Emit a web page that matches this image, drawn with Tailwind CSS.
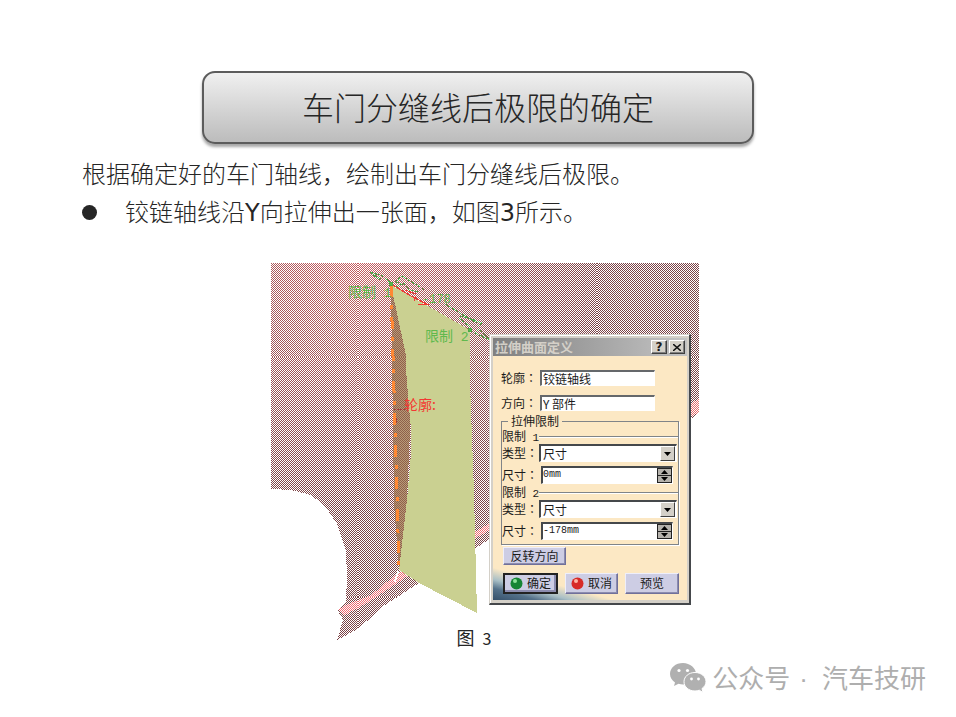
<!DOCTYPE html>
<html lang="zh-CN">

<head>
    <meta charset="UTF-8">
    <meta name="viewport" content="width=device-width, initial-scale=1.0">
    <title>车门分缝线后极限的确定</title>
    <script src="https://cdn.jsdelivr.net/npm/@tailwindcss/browser@4"></script>
</head>

<body class="bg-white text-[#262626] font-['Noto_Sans_CJK_SC',sans-serif]">
    <main class="pt-[71px]">
        <h1 class="mx-auto flex h-[73px] max-w-[552px] items-center justify-center rounded-[13px] border-2 border-[#5c5c5c] bg-linear-to-b from-[#f0f0f0] to-[#bcbcbc] pb-1 text-[32px] font-light shadow-[0_3px_3px_rgba(0,0,0,0.35)]">车门分缝线后极限的确定</h1>

        <section class="px-[82px] pt-[10px] text-[24px] leading-[38px] font-light">
            <p>根据确定好的车门轴线，绘制出车门分缝线后极限。</p>
            <ul>
                <li class="flex items-center">
                    <span class="mr-7 size-[15px] rounded-full bg-[#262626]"></span>
                    <span>铰链轴线沿<span class="font-['DejaVu_Sans'] font-normal">Y</span>向拉伸出一张面，如图<span class="font-['DejaVu_Sans'] font-normal">3</span>所示。</span>
                </li>
            </ul>
        </section>

        <figure class="pt-[31px]">
            <div class="relative left-[7px] mx-auto h-[378px] w-[428px]">
                <!-- CAD view: dithered door panel with the extruded surface -->
                <svg class="block" width="428" height="378" viewBox="0 0 428 378" shape-rendering="crispEdges" role="img" aria-label="拉伸曲面">
                    <defs>
                        <pattern id="even" width="2" height="2" patternUnits="userSpaceOnUse">
                            <path fill="#fff" d="M0 0h1v1h-1zM1 1h1v1h-1z" />
                        </pattern>
                        <pattern id="odd" width="2" height="2" patternUnits="userSpaceOnUse">
                            <path fill="#fff" d="M1 0h1v1h-1zM0 1h1v1h-1z" />
                        </pattern>
                        <mask id="dither" maskUnits="userSpaceOnUse" x="0" y="0" width="428" height="378">
                            <path fill="url(#even)" d="M0 0h87v94h-87zM326 0h102v94h-102zM87 94h239v240h-239zM0 334h87v44h-87z" />
                            <path fill="url(#odd)" d="M87 0h239v94h-239zM0 94h87v240h-87zM326 94h102v284h-102zM87 334h239v44h-239z" />
                        </mask>
                        <radialGradient id="panel" gradientUnits="userSpaceOnUse" cx="80" cy="-10" r="260">
                            <stop offset="0" stop-color="#c95f62" />
                            <stop offset=".4" stop-color="#a5585a" />
                            <stop offset="1" stop-color="#7b4346" />
                        </radialGradient>
                    </defs>
                    <g mask="url(#dither)">
                        <path fill="url(#panel)" d="M0 0H428V150L418 157L219 276L148 320L114 342L87 366L66 377L72 357L67 348L75 338L76 315L75 287L66 261L54 243L40 232L20 227L0 226Z" />
                        <path fill="#ec6870" d="M67 347L75 342L100 332L126 311L150 300L219 260V267L147 306L114 328L96 340L74 352Z" />
                        <path fill="#e56c6c" d="M418 141L428 136V150L418 154Z" />
                    </g>
                    <path fill="#b99b77" d="M120 22L128 57L135 88L140 145L136 237L128 307L123 240Z" />
                    <path fill="#8e5f4b" mask="url(#dither)" d="M120 22L128 57L135 88L140 145L136 237L128 307L123 240Z" />
                    <path fill="#cad091" d="M120 22L199 67L199 120L203 230L206 350L148 320L128 307L136 237L140 190L140 167L137 132L135 106L135 92L128 60Z" />
                    <path fill="none" stroke="#fff" stroke-width="2" d="M127 308L124 319" />
                    <path fill="none" stroke="#ff8834" stroke-width="3" stroke-dasharray="12 8 4 8" d="M120 22L128 304" />

                    <!-- arrows and dimension -->
                    <g fill="none" stroke="#4ca848" stroke-width="1">
                        <path d="M99 9L112 13L108 17ZM100 10L110 16M114 15L120 20M124 19L131 13L154 27M125 19L133 22M125 24L133 20L138 27L148 29M174 41L206 60M188 55L199 64M189 53L204 57M199 56L211 60L207 63M204 70L219 77L208 66Z" stroke-dasharray="3 1" />
                        <circle cx="199" cy="67" r="2" fill="#57b847" />
                        <circle cx="120" cy="21" r="2" fill="#57b847" />
                    </g>
                    <path fill="none" stroke="#f33832" stroke-width="1" d="M122 22L138 32L158 42M134 27L145 31M143 38L145 33M149 38L158 42L147 41" />
                    <g fill="#60b94e" class="text-[14px]">
                        <text x="77" y="34" xml:space="preserve">限制<tspan class="font-['Liberation_Mono'] text-[13px]"> 1</tspan></text>
                        <text x="154" y="78" xml:space="preserve">限制<tspan class="font-['Liberation_Mono'] text-[13px]"> 2</tspan></text>
                        <text x="151" y="40" class="font-['Liberation_Mono'] text-[12px]">-178</text>
                    </g>
                    <path stroke="#a8373b" stroke-dasharray="2 1" d="M123 146h11M125 155v6" />
                    <text x="133" y="147" fill="#f33832" class="text-[14px]">轮廓:</text>
                </svg>

                <!-- dialog window -->
                <form class="absolute top-[71px] left-[218px] flex h-[271px] w-[202px] flex-col border-t border-r-2 border-b-2 border-l border-t-[#d4d0c8] border-r-[#45484b] border-b-[#45484b] border-l-[#d4d0c8] bg-[#d4d0c8] p-[3px] pr-[2px] text-[12px] leading-[12px] text-[#1b1b1b] shadow-[inset_1px_1px_#fff]">
                    <div class="flex h-[18px] shrink-0 items-center gap-[2px] bg-linear-to-r from-[#808080] to-[#c4c4c4] pr-[2px]">
                        <h2 class="flex-1 pl-[2px] text-[13px] font-bold text-[#d4d0c8]">拉伸曲面定义</h2>
                        <button type="button" aria-label="帮助" class="flex h-[14px] w-4 items-center justify-center border border-t-white border-r-[#404040] border-b-[#404040] border-l-white bg-[#d4d0c8] font-['DejaVu_Sans'] text-[12px] font-bold shadow-[inset_-1px_-1px_#808080]">?</button>
                        <button type="button" aria-label="关闭" class="flex h-[14px] w-4 items-center justify-center border border-t-white border-r-[#404040] border-b-[#404040] border-l-white bg-[#d4d0c8] shadow-[inset_-1px_-1px_#808080]">
                            <svg width="8" height="7" viewBox="0 0 8 7"><path stroke="#111" stroke-width="1.500" d="M0 0L8 7M8 0L0 7" /></svg>
                        </button>
                    </div>

                    <div class="flex flex-1 flex-col bg-[linear-gradient(15deg,#35506a_0,#54718a_4%,#a9bfc6_7%,#fce8c4_11%)] px-2 pt-[14px]">
                        <div class="flex h-4 items-center">
                            <label for="profile" class="w-[39px] whitespace-nowrap">轮廓<span lang="zh-TW" class="font-['Noto_Sans_CJK_TC',sans-serif]">：</span></label>
                            <input id="profile" value="铰链轴线" class="h-4 w-[115px] border-t-2 border-r border-b border-l-2 border-t-[#65686b] border-r-white border-b-white border-l-[#65686b] bg-white pl-px">
                        </div>
                        <div class="mt-[9px] flex h-4 items-center">
                            <label for="direction" class="w-[39px] whitespace-nowrap">方向<span lang="zh-TW" class="font-['Noto_Sans_CJK_TC',sans-serif]">：</span></label>
                            <input id="direction" value="Y 部件" class="h-4 w-[115px] border-t-2 border-r border-b border-l-2 border-t-[#65686b] border-r-white border-b-white border-l-[#65686b] bg-white pl-px">
                        </div>

                        <fieldset class="mt-1 h-[130px] w-[178px] border border-[#808488] shadow-[1px_1px_#fff]">
                            <legend class="ml-[6px] px-[3px] leading-[12px]">拉伸限制</legend>
                            <div class="mt-1 flex h-[12px] items-center">
                                <span class="w-[37px] whitespace-nowrap">限制<span class="font-['Liberation_Mono'] text-[11px]"> 1</span></span>
                                <span class="h-[2px] flex-1 border-b border-white bg-[#808488]"></span>
                            </div>
                            <div class="relative mt-px flex h-[18px] items-center">
                                <label for="type1" class="w-[37px] whitespace-nowrap">类型<span lang="zh-TW" class="font-['Noto_Sans_CJK_TC',sans-serif]">：</span></label>
                                <select id="type1" class="h-[18px] w-[138px] appearance-none border-t-2 border-r border-b border-l-2 border-t-[#45484b] border-r-white border-b-white border-l-[#45484b] bg-white pl-[2px]">
                                    <option>尺寸</option>
                                </select>
                                <span class="pointer-events-none absolute top-[2px] right-[3px] flex h-[15px] w-[15px] items-center justify-center border border-t-white border-r-[#404040] border-b-[#404040] border-l-white bg-[#d4d0c8]">
                                    <svg width="7" height="4"><path d="M0 0h7L3.500 4z" /></svg>
                                </span>
                            </div>
                            <div class="mt-[3px] flex h-[19px] items-center">
                                <label for="size1" class="w-[39px] whitespace-nowrap">尺寸<span lang="zh-TW" class="font-['Noto_Sans_CJK_TC',sans-serif]">：</span></label>
                                <span class="flex h-[18px] w-[132px] border-t-2 border-r border-b border-l-2 border-t-[#45484b] border-r-white border-b-white border-l-[#45484b] bg-white">
                                    <input id="size1" value="0mm" class="min-w-0 flex-1 bg-transparent pb-px font-['Liberation_Mono'] text-[10px]">
                                    <span class="flex w-[15px] flex-col bg-[#222] p-px">
                                        <button type="button" aria-label="增加" class="flex h-[6px] items-center justify-center bg-[#b5b2ac]"><svg width="7" height="4"><path d="M0 4h7L3.500 0z" /></svg></button>
                                        <button type="button" aria-label="减少" class="mt-px flex h-[6px] items-center justify-center bg-[#b5b2ac]"><svg width="7" height="4"><path d="M0 0h7L3.500 4z" /></svg></button>
                                    </span>
                                </span>
                            </div>
                            <div class="mt-[3px] flex h-[12px] items-center">
                                <span class="w-[37px] whitespace-nowrap">限制<span class="font-['Liberation_Mono'] text-[11px]"> 2</span></span>
                                <span class="h-[2px] flex-1 border-b border-white bg-[#808488]"></span>
                            </div>
                            <div class="relative mt-px flex h-[18px] items-center">
                                <label for="type2" class="w-[37px] whitespace-nowrap">类型<span lang="zh-TW" class="font-['Noto_Sans_CJK_TC',sans-serif]">：</span></label>
                                <select id="type2" class="h-[18px] w-[138px] appearance-none border-t-2 border-r border-b border-l-2 border-t-[#45484b] border-r-white border-b-white border-l-[#45484b] bg-white pl-[2px]">
                                    <option>尺寸</option>
                                </select>
                                <span class="pointer-events-none absolute top-[2px] right-[3px] flex h-[15px] w-[15px] items-center justify-center border border-t-white border-r-[#404040] border-b-[#404040] border-l-white bg-[#d4d0c8]">
                                    <svg width="7" height="4"><path d="M0 0h7L3.500 4z" /></svg>
                                </span>
                            </div>
                            <div class="mt-[3px] flex h-[19px] items-center">
                                <label for="size2" class="w-[39px] whitespace-nowrap">尺寸<span lang="zh-TW" class="font-['Noto_Sans_CJK_TC',sans-serif]">：</span></label>
                                <span class="flex h-[18px] w-[132px] border-t-2 border-r border-b border-l-2 border-t-[#45484b] border-r-white border-b-white border-l-[#45484b] bg-white">
                                    <input id="size2" value="-178mm" class="min-w-0 flex-1 bg-transparent pb-px font-['Liberation_Mono'] text-[10px]">
                                    <span class="flex w-[15px] flex-col bg-[#222] p-px">
                                        <button type="button" aria-label="增加" class="flex h-[6px] items-center justify-center bg-[#b5b2ac]"><svg width="7" height="4"><path d="M0 4h7L3.500 0z" /></svg></button>
                                        <button type="button" aria-label="减少" class="mt-px flex h-[6px] items-center justify-center bg-[#b5b2ac]"><svg width="7" height="4"><path d="M0 0h7L3.500 4z" /></svg></button>
                                    </span>
                                </span>
                            </div>
                        </fieldset>

                        <button type="button" class="mt-[2px] ml-[2px] h-[18px] w-[63px] border border-t-[#eeeefa] border-r-[#70709b] border-b-[#70709b] border-l-[#eeeefa] bg-[#cdcde4] pb-px shadow-[inset_-1px_-1px_#8c8caf]">反转方向</button>
                        <div class="mt-2 ml-[2px] flex gap-[7px]">
                            <button type="button" class="flex h-[21px] w-[55px] items-center justify-center gap-1 border-2 border-[#222] bg-[#cdcde4] pb-px shadow-[inset_-2px_-2px_#8c8caf]">
                                <svg width="13" height="13"><circle cx="6.500" cy="6.500" r="6" fill="#168535" /><circle cx="5" cy="4" r="2" fill="#8de39a" /></svg>确定
                            </button>
                            <button type="button" class="flex h-[21px] w-[53px] items-center justify-center gap-1 border border-t-[#eeeefa] border-r-[#70709b] border-b-[#70709b] border-l-[#eeeefa] bg-[#cdcde4] pb-px shadow-[inset_-1px_-1px_#8c8caf]">
                                <svg width="13" height="13"><circle cx="6.500" cy="6.500" r="6" fill="#d72b28" /><circle cx="5" cy="4" r="2" fill="#ffb6a4" /></svg>取消
                            </button>
                            <button type="button" class="h-[21px] w-[54px] border border-t-[#eeeefa] border-r-[#70709b] border-b-[#70709b] border-l-[#eeeefa] bg-[#cdcde4] pb-px shadow-[inset_-1px_-1px_#8c8caf]">预览</button>
                        </div>
                    </div>
                </form>
            </div>
            <figcaption class="-mt-4 pr-2 text-center text-[18px] leading-6">图 <span class="pl-1 text-[16px]">3</span></figcaption>
        </figure>
    </main>

    <footer class="flex items-center justify-end gap-[6px] pt-[7px] pr-[30px] text-[26px] leading-[40px] text-[#aeaeae]">
        <svg width="36" height="30" viewBox="0 0 36 30" fill="#b0b0b0" aria-hidden="true">
            <path d="M13 0C5.500 0 0 4.800 0 11c0 3.500 2 6.500 5 8.500L4 23l4.500-2.300c1.600.5 3.100.7 4.500.7 7 0 13-4.500 13-10.400S20 0 13 0z" />
            <path stroke="#fff" stroke-width="1" d="M25 9.500c-6.200 0-11 4-11 9.200s4.800 9.300 11 9.300c1.500 0 3-.3 4.300-.8L33 29.500l-1-4c2.500-1.700 4-4 4-6.800 0-5.200-4.800-9.200-11-9.200z" />
            <g fill="#fff"><circle cx="9" cy="7.500" r="1.600" /><circle cx="17.500" cy="7.500" r="1.600" /><circle cx="21.500" cy="16" r="1.400" /><circle cx="28.500" cy="16" r="1.400" /></g>
        </svg>
        <span>公众号<span class="pr-[14px] pl-[9px] font-['Liberation_Sans']">·</span>汽车技研</span>
    </footer>
</body>

</html>
